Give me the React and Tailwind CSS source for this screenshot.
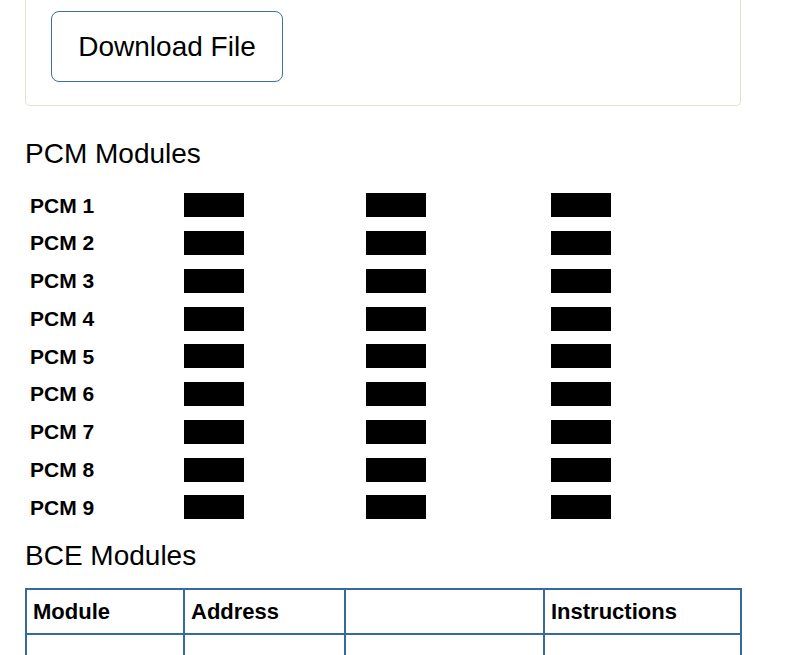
import React from "react";

const rows = [1, 2, 3, 4, 5, 6, 7, 8, 9];

export default function App() {
  return (
    <div className="w-[801px] h-[655px] overflow-hidden bg-white text-black" style={{ fontFamily: '"Liberation Sans", Arial, sans-serif' }}>
      <div className="ml-[25px] w-[716px]">
        <div className="border border-t-0 border-[#dde3cf] rounded-b-[5px] pt-[11px] pb-[23px] px-[25px]">
          <button className="w-[232px] h-[71px] border border-[#3f6f9f] rounded-[8px] bg-white text-[28px] leading-none text-black">
            Download File
          </button>
        </div>

        <h2 className="mt-[31px] text-[28px] leading-[1.2] font-normal">PCM Modules</h2>

        <div className="mt-[16px] pl-[5px] grid grid-cols-[154px_182px_185px_1fr]">
          {rows.map((n) => (
            <React.Fragment key={n}>
              <div className="h-[37.75px] flex items-center text-[21px] font-bold">PCM {n}</div>
              <div className="h-[37.75px] flex items-center"><div className="w-[60px] h-[24px] bg-black" /></div>
              <div className="h-[37.75px] flex items-center"><div className="w-[60px] h-[24px] bg-black" /></div>
              <div className="h-[37.75px] flex items-center"><div className="w-[60px] h-[24px] bg-black" /></div>
            </React.Fragment>
          ))}
        </div>

        <h2 className="mt-[13px] text-[28px] leading-[1.2] font-normal">BCE Modules</h2>

        <table className="mt-[15px] w-[715px] table-fixed border-collapse border-2 border-[#356a9c]">
          <colgroup>
            <col className="w-[158px]" />
            <col className="w-[161px]" />
            <col className="w-[199px]" />
            <col className="w-[197px]" />
          </colgroup>
          <thead>
            <tr className="h-[45px]">
              <th className="border-2 border-[#356a9c] text-left font-bold text-[22px] pl-[6px] pr-[6px]">Module</th>
              <th className="border-2 border-[#356a9c] text-left font-bold text-[22px] pl-[6px] pr-[6px]">Address</th>
              <th className="border-2 border-[#356a9c] text-left font-bold text-[22px] pl-[6px] pr-[6px]"></th>
              <th className="border-2 border-[#356a9c] text-left font-bold text-[22px] pl-[6px] pr-[6px]">Instructions</th>
            </tr>
          </thead>
          <tbody>
            <tr className="h-[44px]">
              <td className="border-2 border-[#356a9c]"></td>
              <td className="border-2 border-[#356a9c]"></td>
              <td className="border-2 border-[#356a9c]"></td>
              <td className="border-2 border-[#356a9c]"></td>
            </tr>
          </tbody>
        </table>
      </div>
    </div>
  );
}
